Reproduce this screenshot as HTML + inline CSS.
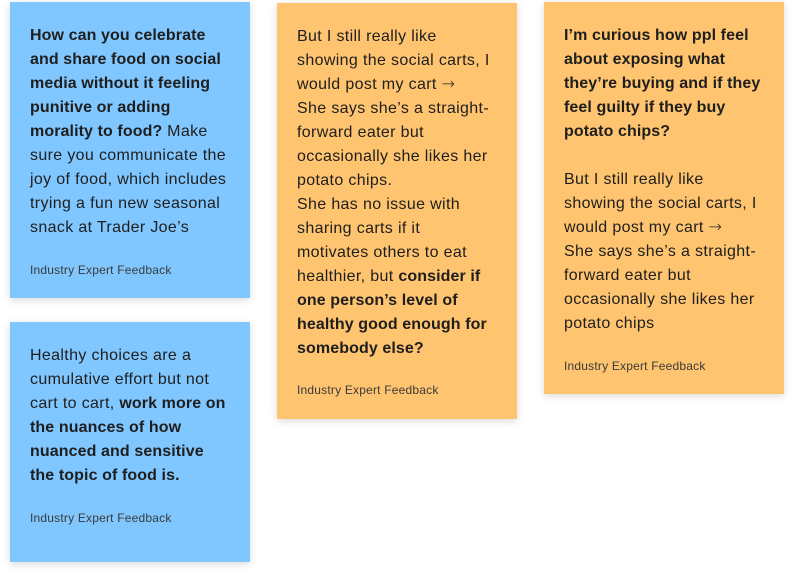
<!DOCTYPE html>
<html><head><meta charset="utf-8"><style>
body{margin:0;width:794px;height:580px;background:#fff;font-family:"Liberation Sans",Arial,sans-serif;position:relative;overflow:hidden}
.c{position:absolute;width:240px;box-sizing:border-box;padding:22px 20px 0 20px;box-shadow:0 2px 8px rgba(0,0,0,0.15);color:#1e1e1e}
.b{background:#80C7FF}.o{background:#FFC46F}
.t{font-size:16px;line-height:24px;white-space:nowrap;letter-spacing:0.35px}
.t b{letter-spacing:0.1px}
b{font-weight:bold}
.a{font-family:"DejaVu Sans",sans-serif;font-size:16px;line-height:0;font-weight:200}
.f{position:absolute;left:20px;font-size:12px;line-height:16px;color:#3a3a3a;letter-spacing:0.2px}
</style></head><body>
<div class="c b" style="left:10px;top:2px;height:296px">
<div class="t"><b>How can you celebrate<br>and share food on social<br>media without it feeling<br>punitive or adding<br>morality to food?</b> Make<br>sure you communicate the<br>joy of food, which includes<br>trying a fun new seasonal<br>snack at Trader Joe’s</div>
<div class="f" style="top:260px">Industry Expert Feedback</div></div>
<div class="c b" style="left:10px;top:322px;height:240px">
<div class="t">Healthy choices are a<br>cumulative effort but not<br>cart to cart, <b>work more on<br>the nuances of how<br>nuanced and sensitive<br>the topic of food is.</b></div>
<div class="f" style="top:188px">Industry Expert Feedback</div></div>
<div class="c o" style="left:277px;top:3px;height:416px">
<div class="t">But I still really like<br>showing the social carts, I<br>would post my cart <span class="a">→</span><br>She says she’s a straight-<br>forward eater but<br>occasionally she likes her<br>potato chips.<br>She has no issue with<br>sharing carts if it<br>motivates others to eat<br>healthier, but <b>consider if<br>one person’s level of<br>healthy good enough for<br>somebody else?</b></div>
<div class="f" style="top:379px">Industry Expert Feedback</div></div>
<div class="c o" style="left:544px;top:2px;height:392px">
<div class="t"><b>I’m curious how ppl feel<br>about exposing what<br>they’re buying and if they<br>feel guilty if they buy<br>potato chips?</b><br><br>But I still really like<br>showing the social carts, I<br>would post my cart <span class="a">→</span><br>She says she’s a straight-<br>forward eater but<br>occasionally she likes her<br>potato chips</div>
<div class="f" style="top:356px">Industry Expert Feedback</div></div>
</body></html>
